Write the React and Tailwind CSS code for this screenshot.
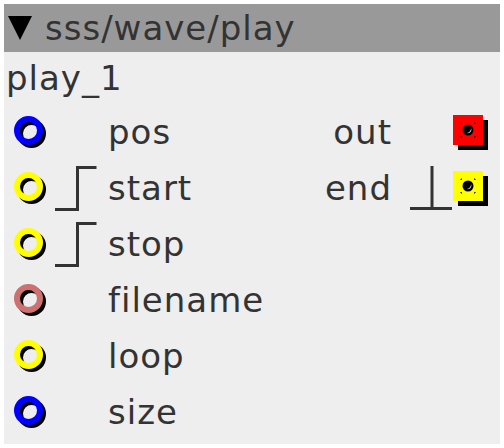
const font = { fontFamily: '"DejaVu Sans", sans-serif' };

function Inlet({ color }) {
  return (
    <div className="relative w-[32px] h-[32px] shrink-0">
      <div className="absolute left-[3px] top-[3px] w-[29px] h-[29px] rounded-full border-[6px] border-black" />
      <div className={`absolute left-0 top-0 w-[29px] h-[29px] rounded-full border-[6px] ${color}`} />
    </div>
  );
}

function Outlet({ color }) {
  return (
    <div className="relative w-[35px] h-[35px] shrink-0">
      <div className="absolute left-[5px] top-[5px] w-[30px] h-[30px] bg-black" />
      <div className={`absolute left-0 top-0 w-[30px] h-[30px] ${color} flex items-center justify-center`}>
        <svg width="30" height="30" viewBox="0 0 30 30">
          <path d="M8 9V8h1M21 8h1v1M22 21v1h-1M9 22H8v-1" stroke="#000" strokeWidth="1" fill="none" />
          <circle cx="15" cy="15" r="5.5" fill="#000" />
          <path d="M18 13a3.5 3.5 0 0 1-4 5a4.5 4.5 0 0 0 4-5z" fill="#fff" />
        </svg>
      </div>
    </div>
  );
}

function Rise() {
  return (
    <svg width="44" height="46" viewBox="0 0 44 46" className="shrink-0">
      <path d="M1 44.5h22.5V2.5h19" stroke="#333" strokeWidth="3" fill="none" />
    </svg>
  );
}

function Tee() {
  return (
    <svg width="43" height="46" viewBox="0 0 43 46" className="shrink-0">
      <path d="M0 43.5h42M22 1v42" stroke="#333" strokeWidth="3" fill="none" />
    </svg>
  );
}

const rows = [
  { name: 'pos', color: 'border-[#0000ff]', out: 'out', outColor: 'bg-[#ff0000]' },
  { name: 'start', color: 'border-[#ffff00]', step: true, out: 'end', outColor: 'bg-[#ffff00]', tee: true },
  { name: 'stop', color: 'border-[#ffff00]', step: true },
  { name: 'filename', color: 'border-[#cc7070]' },
  { name: 'loop', color: 'border-[#ffff00]' },
  { name: 'size', color: 'border-[#0000ff]' },
];

export default function App() {
  return (
    <div className="w-[504px] h-[448px] bg-white p-[4px]" style={font}>
      <div className="w-[496px] h-[440px] bg-[#eeeeee] text-[#333333] text-[34px] leading-none tracking-[1px]">
        <div className="h-[48px] bg-[#999999] flex items-center pl-[4px] gap-[13px]">
          <svg width="24" height="24" viewBox="0 0 24 24" className="shrink-0">
            <path d="M0 0h24L12 24z" fill="#000" />
          </svg>
          <span className="text-[#333333]">sss/wave/play</span>
        </div>
        <div className="h-[52px] flex items-center pl-[2px]">play_1</div>
        {rows.map(r => (
          <div key={r.name} className="h-[56px] flex items-center">
            <div className="w-[50px] pl-[10px] flex items-center">
              <Inlet color={r.color} />
            </div>
            <div className="w-[54px] flex items-center">
              {r.step && <Rise />}
            </div>
            <div className="flex-1">{r.name}</div>
            {r.out && (
              <div className="flex items-center">
                <span className="pr-[18px]">{r.out}</span>
                <div className="w-[43px] flex items-center">{r.tee && <Tee />}</div>
                <div className="w-[47px] pr-[12px]">
                  <Outlet color={r.outColor} />
                </div>
              </div>
            )}
          </div>
        ))}
      </div>
    </div>
  );
}
